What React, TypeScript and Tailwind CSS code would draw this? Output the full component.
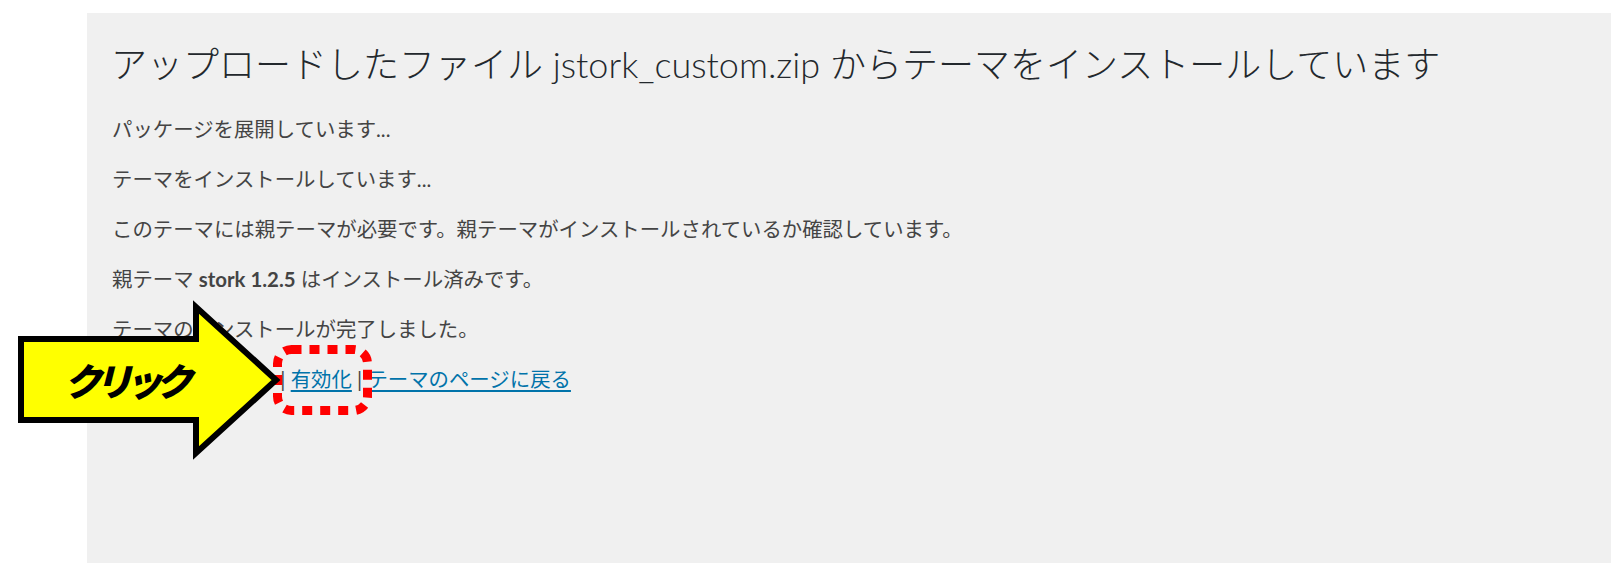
import React from "react";

const jp = { fontFamily: 'Lato, "Noto Sans CJK JP", sans-serif' };

export default function App() {
  return (
    <div className="relative w-[1623px] h-[581px] bg-white pt-[13px] pl-[87px]" style={jp}>
      <div className="w-[1524px] h-[550px] bg-[#f0f0f0] pt-[28px] pl-[24px]">
        <h1 className="text-[36px] leading-[46px] font-light text-[#23282d] m-0 whitespace-nowrap">
          アップロードしたファイル jstork_custom.zip からテーマをインストールしています
        </h1>
        <div className="mt-[27px] flex flex-col gap-[20px] text-[20.4px] leading-[30px] text-[#444] pl-[1px]">
          <p>パッケージを展開しています...</p>
          <p>テーマをインストールしています...</p>
          <p>このテーマには親テーマが必要です。親テーマがインストールされているか確認しています。</p>
          <p>
            親テーマ <strong className="font-bold">stork 1.2.5</strong> はインストール済みです。
          </p>
          <p>テーマのインストールが完了しました。</p>
          <p className="whitespace-nowrap">
            <span className="invisible">ライブプレビュー</span> |{" "}
            <a className="text-[#0073aa] underline underline-offset-[3px]">有効化</a> |{" "}
            <a className="text-[#0073aa] underline underline-offset-[3px]">テーマのページに戻る</a>
          </p>
        </div>
      </div>

      <svg
        className="absolute left-0 top-0 pointer-events-none"
        width="1623"
        height="581"
        viewBox="0 0 1623 581"
      >
        <rect
          x="277.5"
          y="349.5"
          width="90"
          height="61"
          rx="14"
          fill="none"
          stroke="#ff0000"
          strokeWidth="9"
          strokeDasharray="10 8"
        />
        <polygon
          points="21,339 196,339 196,307 276,380 196,453 196,420 21,420"
          fill="#ffff00"
          stroke="#000"
          strokeWidth="6"
          strokeLinejoin="miter"
        />
      </svg>
      <div
        className="absolute left-[64px] top-[356px] h-[48px] flex items-center text-[38px] font-black italic text-black tracking-[-0.2em] leading-none"
        style={{ fontFamily: '"Noto Sans CJK JP", sans-serif' }}
      >
        クリック
      </div>
    </div>
  );
}
